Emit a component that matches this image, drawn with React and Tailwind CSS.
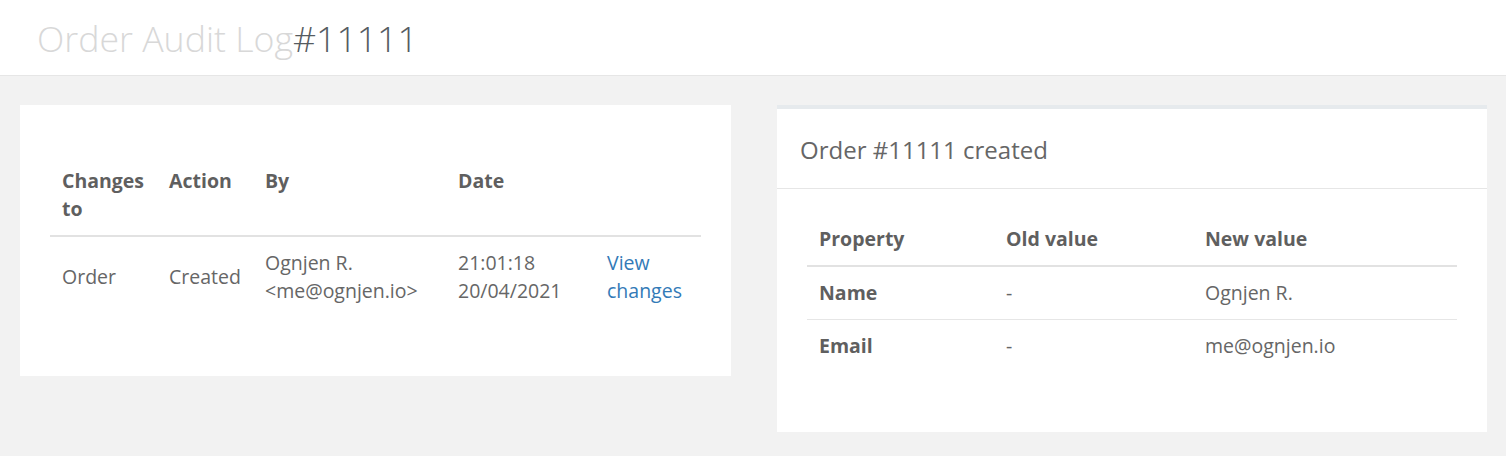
export default function App() {
  const auditRows = [
    {
      model: "Order",
      action: "Created",
      by: ["Ognjen R.", "<me@ognjen.io>"],
      date: ["21:01:18", "20/04/2021"],
    },
  ];

  const changes = [
    { prop: "Name", oldVal: "-", newVal: "Ognjen R." },
    { prop: "Email", oldVal: "-", newVal: "me@ognjen.io" },
  ];

  return (
    <div
      className="min-h-[456px] bg-[#f2f2f2] text-[#666]"
      style={{ fontFamily: '"Open Sans", sans-serif' }}
    >
      <div className="h-[76px] bg-white border-b border-[#e6e6e6] pl-[37px] pt-[13px]">
        <h1 className="text-[35.7px] leading-[50px] font-light text-[#d8d8d8]">
          Order Audit Log<span className="text-[#555b61]">#11111</span>
        </h1>
      </div>

      <div className="flex items-start gap-[46px] pl-[20px] pt-[29px]">
        <div className="w-[711px] bg-white px-[30px] pt-[50px] pb-[59px]">
          <table className="w-full text-[19.5px] leading-[28px] text-[#666]">
            <thead>
              <tr className="border-b-2 border-[#e2e2e2] text-left text-[#5f5f5f]">
                <th className="w-[107px] align-top px-3 pt-3 pb-3 font-bold">
                  Changes to
                </th>
                <th className="w-[96px] align-top px-3 pt-3 pb-3 font-bold">Action</th>
                <th className="w-[193px] align-top px-3 pt-3 pb-3 font-bold">By</th>
                <th className="w-[149px] align-top px-3 pt-3 pb-3 font-bold">Date</th>
                <th className="align-top px-3 pt-3 pb-3"></th>
              </tr>
            </thead>
            <tbody>
              {auditRows.map((row, i) => (
                <tr key={i}>
                  <td className="px-3 py-3 align-middle">{row.model}</td>
                  <td className="px-3 py-3 align-middle">{row.action}</td>
                  <td className="px-3 py-3 align-middle">
                    {row.by[0]}
                    <br />
                    {row.by[1]}
                  </td>
                  <td className="px-3 py-3 align-middle">
                    {row.date[0]}
                    <br />
                    {row.date[1]}
                  </td>
                  <td className="px-3 py-3 align-middle">
                    <a href="#" className="text-[#337ab7]">
                      View
                      <br />
                      changes
                    </a>
                  </td>
                </tr>
              ))}
            </tbody>
          </table>
        </div>

        <div className="w-[710px] bg-white border-t-4 border-[#e6eaed]">
          <div className="px-[23px] pt-[24px] pb-[22px] border-b border-[#e6e6e6]">
            <h2 className="text-[24px] leading-[33px] text-[#666]">
              Order #11111 created
            </h2>
          </div>
          <div className="px-[30px] pt-[24px] pb-[60px]">
            <table className="w-full text-[19.5px] leading-[28px] text-[#666]">
              <thead>
                <tr className="border-b-2 border-[#e2e2e2] text-left text-[#5f5f5f]">
                  <th className="w-[187px] px-3 py-3 font-bold">Property</th>
                  <th className="w-[199px] px-3 py-3 font-bold">Old value</th>
                  <th className="px-3 py-3 font-bold">New value</th>
                </tr>
              </thead>
              <tbody>
                {changes.map((c, i) => (
                  <tr
                    key={c.prop}
                    className={i < changes.length - 1 ? "border-b border-[#e6e6e6]" : ""}
                  >
                    <td className="px-3 py-3 font-bold text-[#5f5f5f]">{c.prop}</td>
                    <td className="px-3 py-3">{c.oldVal}</td>
                    <td className="px-3 py-3">{c.newVal}</td>
                  </tr>
                ))}
              </tbody>
            </table>
          </div>
        </div>
      </div>
    </div>
  );
}
